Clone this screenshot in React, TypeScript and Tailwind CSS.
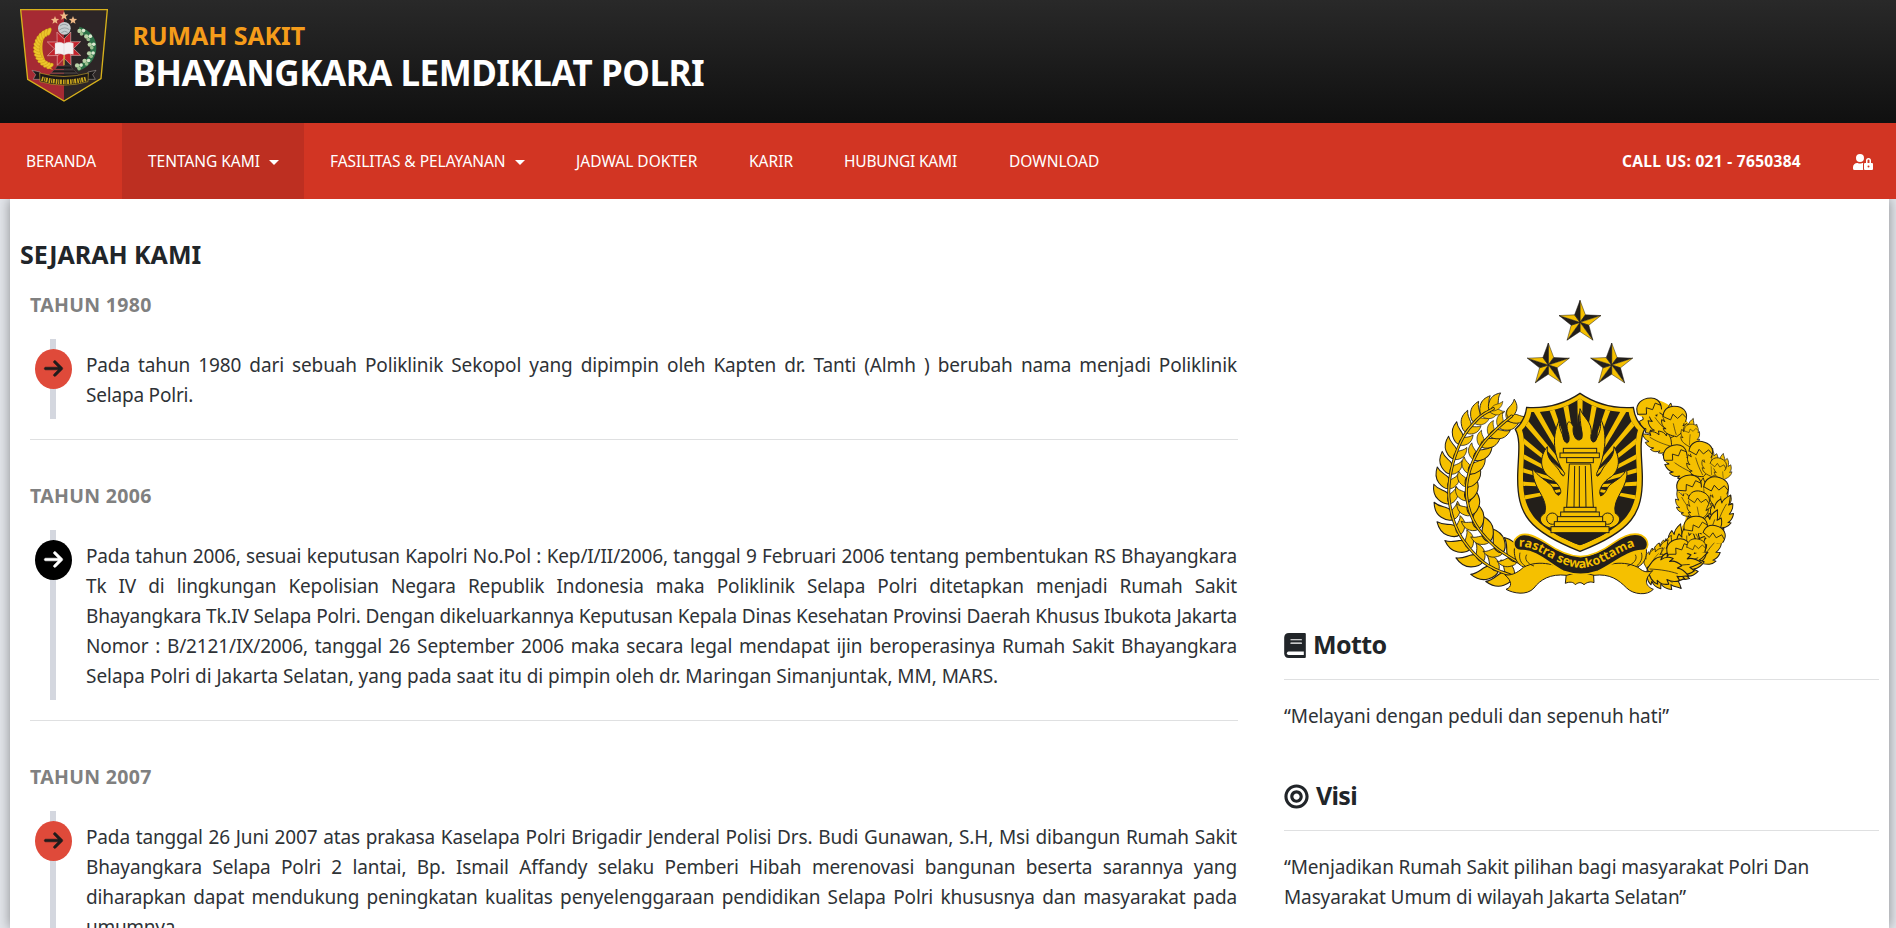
import React from "react";
import { FaBullseye, FaUserLock } from "react-icons/fa";
import { FaArrowRight } from "react-icons/fa6";

const GOLD = "#f5c000";
const INK = "#231f1a";

type Pt = [number, number];

/* ---------- drawing helpers ---------- */

function starFacets(cx: number, cy: number, r: number) {
  const facets: { d: string; dark: boolean }[] = [];
  const at = (i: number): Pt => {
    const a = (-90 + i * 36) * (Math.PI / 180);
    const rad = i % 2 === 0 ? r : r * 0.42;
    return [cx + Math.cos(a) * rad, cy + Math.sin(a) * rad];
  };
  for (let i = 0; i < 10; i++) {
    const p = at(i);
    const q = at(i + 1);
    facets.push({
      d: `M${cx} ${cy}L${p[0].toFixed(1)} ${p[1].toFixed(1)}L${q[0].toFixed(1)} ${q[1].toFixed(1)}Z`,
      dark: i % 2 === 1,
    });
  }
  return facets;
}

function Star({ cx, cy, r }: { cx: number; cy: number; r: number }) {
  return (
    <g stroke={INK} strokeWidth="1.5" strokeLinejoin="round">
      {starFacets(cx, cy, r).map((f) => (
        <path key={f.d} d={f.d} fill={f.dark ? INK : GOLD} />
      ))}
    </g>
  );
}

/* Catmull-Rom interpolation through a stem's control points. */
function along(points: Pt[], t: number): { x: number; y: number; angle: number } {
  const n = points.length - 1;
  const s = Math.min(t * n, n - 0.0001);
  const i = Math.floor(s);
  const u = s - i;
  const p0 = points[Math.max(i - 1, 0)];
  const p1 = points[i];
  const p2 = points[i + 1];
  const p3 = points[Math.min(i + 2, n)];
  const f = (k: 0 | 1) =>
    0.5 *
    (2 * p1[k] +
      (p2[k] - p0[k]) * u +
      (2 * p0[k] - 5 * p1[k] + 4 * p2[k] - p3[k]) * u * u +
      (3 * p1[k] - p0[k] - 3 * p2[k] + p3[k]) * u * u * u);
  const g = (k: 0 | 1) =>
    0.5 *
    (p2[k] -
      p0[k] +
      2 * (2 * p0[k] - 5 * p1[k] + 4 * p2[k] - p3[k]) * u +
      3 * (3 * p1[k] - p0[k] - 3 * p2[k] + p3[k]) * u * u);
  return { x: f(0), y: f(1), angle: (Math.atan2(g(1), g(0)) * 180) / Math.PI };
}

const outerStem: Pt[] = [[320, 892], [225, 850], [150, 765], [118, 665], [124, 570], [156, 478], [205, 415], [250, 386]];
const innerStem: Pt[] = [[330, 850], [255, 800], [195, 730], [170, 650], [178, 575], [212, 500], [262, 445], [305, 408]];

const LEAF = "M0 0C2 -14 16 -23 34 -18C48 -14 56 -9 72 -12C62 3 50 13 32 13C16 13 5 8 0 0Z";

function Grain({ stem, side, count, size }: { stem: Pt[]; side: 1 | -1; count: number; size: number }) {
  return (
    <>
      {Array.from({ length: count }, (_, i) => {
        const t = (i + 0.3) / count;
        const p = along(stem, t);
        const s = size * (1.05 - 0.3 * t);
        return (
          <path
            key={i}
            d={LEAF}
            transform={`translate(${p.x.toFixed(1)} ${p.y.toFixed(1)}) rotate(${(p.angle + side * 40).toFixed(1)}) scale(${s.toFixed(2)} ${(s * side).toFixed(2)})`}
          />
        );
      })}
    </>
  );
}

function stemPath(stem: Pt[]) {
  return Array.from({ length: 41 }, (_, i) => {
    const p = along(stem, i / 40);
    return `${i ? "L" : "M"}${p.x.toFixed(1)} ${p.y.toFixed(1)}`;
  }).join("");
}

const OAK =
  "M0 0C-18 -8 -36 -16 -38 -36L-29 -33C-40 -44 -41 -54 -37 -66L-28 -57C-34 -72 -27 -84 -21 -92L-13 -81C-14 -96 -4 -106 4 -114C4 -104 11 -94 9 -83L20 -92C26 -80 27 -70 22 -57L34 -64C37 -50 37 -42 28 -31L38 -34C34 -14 16 -8 0 0Z";

const oakLeaves: [number, number, number, number][] = [
  [790, 470, -45, 0.95], [785, 500, -68, 0.85], [800, 470, -12, 0.9], [838, 500, 6, 0.75],
  [850, 580, -60, 0.95], [880, 590, -22, 0.85], [905, 590, 0, 0.75], [940, 600, -2, 0.7],
  [855, 705, -38, 0.8], [890, 690, -8, 0.85], [935, 700, -2, 0.85], [870, 720, -10, 0.8],
  [918, 745, 22, 0.95], [880, 800, -28, 0.9], [895, 800, 12, 1.0], [800, 845, 4, 1.0], [840, 850, -8, 1.0],
  [870, 850, 34, 0.95], [765, 855, 10, 0.8], [830, 860, 30, 0.95], [735, 868, 22, 0.85], [785, 880, 58, 1.1],
  [712, 868, 34, 0.7], [740, 872, 78, 1.2], [712, 862, 120, 1.05], [712, 866, 98, 1.1],
];

const acorns: [number, number, number, number][] = [
  [718, 385, -15, 1.05], [796, 408, 10, 1], [796, 524, -15, 1], [874, 514, 15, 1], [926, 555, 25, 0.7], [845, 450, 5, 0.6],
  [838, 616, -10, 1.05], [920, 622, 15, 1.05], [868, 660, 20, 0.9], [858, 738, -5, 1], [914, 765, 25, 0.95], [806, 806, -15, 1], [860, 800, 10, 0.8],
];

const SHIELD =
  "M510 340C460 374 408 386 350 382C346 412 334 432 316 448C334 480 324 530 323 590C322 700 352 752 510 814C668 752 698 700 697 590C696 530 686 480 704 448C686 432 674 412 670 382C612 386 560 374 510 340Z";
const FIELD =
  "M510 356C462 386 415 397 364 396C360 420 350 436 336 450C348 488 340 532 339 590C338 690 368 740 510 796C652 740 682 690 681 590C680 532 672 488 684 450C670 436 660 420 656 396C605 397 558 386 510 356Z";
const FLAMES =
  "M425 745C395 740 378 715 404 700C418 655 366 625 368 566C384 588 400 596 414 608C434 620 430 640 446 646C464 634 440 606 420 592C388 570 388 530 412 500C408 540 432 548 448 572C456 590 462 592 464 580C436 540 420 480 448 420C446 450 458 458 462 478C470 500 484 486 474 456C466 430 476 412 490 440C486 460 496 482 508 480C524 474 506 420 510 386C520 414 546 424 544 460C538 480 550 496 558 478C572 452 574 440 570 414C592 450 590 520 560 580C558 594 566 590 574 574C588 544 612 540 612 500C634 540 626 572 604 590C580 604 562 630 572 648C592 640 588 620 606 610C622 598 640 590 650 566C660 620 604 655 616 700C642 715 625 740 595 745Z";

function PoliceEmblem() {
  return (
    <svg viewBox="0 0 1020 990" className="h-[330px] w-[340px]" aria-hidden="true">
      <Star cx={510} cy={127} r={66} />
      <Star cx={415} cy={255} r={66} />
      <Star cx={605} cy={255} r={66} />

      <g fill={GOLD} stroke={INK} strokeWidth="3" strokeLinejoin="round">
        <Grain stem={outerStem} side={-1} count={15} size={1.12} />
        <Grain stem={outerStem} side={1} count={15} size={0.82} />
        <Grain stem={innerStem} side={-1} count={13} size={0.8} />
        <Grain stem={innerStem} side={1} count={13} size={1.08} />
        <path d={LEAF} transform="translate(245 392) rotate(-32) scale(.6 .5)" />
        <path d={LEAF} transform="translate(298 414) rotate(-66) scale(.8)" />
      </g>
      <g fill="none" strokeLinecap="round">
        <path d={stemPath(outerStem)} stroke={INK} strokeWidth="9" />
        <path d={stemPath(outerStem)} stroke={GOLD} strokeWidth="4" />
        <path d={stemPath(innerStem)} stroke={INK} strokeWidth="9" />
        <path d={stemPath(innerStem)} stroke={GOLD} strokeWidth="4" />
      </g>

      <path
        d="M690 368C730 350 760 362 790 384C840 430 860 450 850 490C900 510 935 550 930 600C950 680 935 760 900 820C870 860 820 880 730 890L700 850C740 810 800 800 815 740C850 700 800 650 815 600C850 570 790 560 770 520C750 480 700 440 690 368Z"
        fill={GOLD}
      />
      <g fill={GOLD} stroke={INK} strokeWidth="3" strokeLinejoin="round">
        <path d="M688 424L700 418L696 404C730 396 760 420 766 446L776 470L764 468L756 484L748 474L738 484L732 470L722 474L720 460L706 458L708 446L696 444Z" />
        {oakLeaves.map(([x, y, a, s], i) => (
          <g key={i} transform={`translate(${x} ${y}) rotate(${a}) scale(${s})`}>
            <path d={OAK} />
            <path d="M0 -6C-3 -40 -2 -60 2 -84" fill="none" strokeWidth="2" />
          </g>
        ))}
        {acorns.map(([x, y, a, s], i) => (
          <g key={i} transform={`translate(${x} ${y}) rotate(${a}) scale(${s})`}>
            <path d="M-36 10C-40 -18 -20 -30 2 -29C26 -28 38 -12 33 12C26 27 -24 27 -36 10Z" stroke="none" />
            <path d="M-36 10C-40 -18 -20 -30 2 -29C26 -28 38 -12 33 12" fill="none" />
            <path d="M-36 8L-12 14L-8 -4L8 6L20 -10L34 0" fill="none" strokeWidth="2.5" />
          </g>
        ))}
      </g>

      <path d={SHIELD} fill={GOLD} stroke={INK} strokeWidth="4" />
      <clipPath id="field">
        <path d={FIELD} />
      </clipPath>
      <path d={FIELD} fill={INK} />
      <g clipPath="url(#field)" fill={GOLD}>
        {[-101, -87, -74, -62, -51, -40, -30, -20, -10, 0, 10, 20, 30, 40, 51, 62, 74, 87, 101].map((a) => (
          <path key={a} d="M507 620L500 250L520 250L513 620Z" transform={`rotate(${a} 510 620)`} />
        ))}
        <rect x="320" y="760" width="380" height="60" fill={INK} />
      </g>
      <path d={FLAMES} fill={GOLD} stroke={INK} strokeWidth="3" />
      <g fill={INK}>
        <path d="M500 440C496 460 498 480 509 480C522 480 520 458 512 436C508 420 508 408 510 392C500 410 504 424 500 440Z" />
        <path d="M462 436C452 458 458 486 468 487C484 480 474 460 466 446Z" />
        <path d="M558 436C568 458 562 486 552 487C536 480 546 460 554 446Z" />
      </g>
      <g fill={GOLD} stroke={INK} strokeWidth="3">
        <circle cx="427" cy="716" r="17" />
        <circle cx="593" cy="716" r="17" />
        <path d="M478 552H542L550 682H470Z" />
        <path d="M494 558L492 682M508 558V682M526 558L528 682" fill="none" />
        <rect x="460" y="505" width="100" height="14" />
        <rect x="450" y="519" width="118" height="14" />
        <rect x="470" y="533" width="80" height="15" />
        <rect x="462" y="682" width="96" height="14" />
        <rect x="452" y="696" width="116" height="14" />
        <rect x="442" y="710" width="136" height="15" />
        <rect x="433" y="725" width="154" height="15" />
        <rect x="423" y="740" width="174" height="18" />
      </g>

      <g fill={GOLD} stroke={INK} strokeWidth="3" strokeLinejoin="round">
        <path d="M470 872L466 910C480 904 490 906 496 914C506 906 514 906 522 914C532 906 542 904 552 908L550 872Z" />
        <path d="M318 784C304 826 320 858 350 864L450 866L400 806Z" />
        <path d="M704 784C718 826 704 858 672 864L572 866L624 806Z" />
        <path d="M340 862C390 836 440 856 500 878L470 886C420 880 390 900 372 924C350 948 310 940 288 928C306 922 308 904 284 884C300 888 322 880 340 862Z" />
        <path d="M684 862C630 836 580 856 520 878L552 886C600 880 626 900 650 924C670 944 712 948 730 928C706 918 700 900 728 872C706 880 696 872 684 862Z" />
      </g>
      <path
        d="M330 766C350 756 378 770 410 790C450 818 480 828 512 830C546 828 574 816 612 788C640 768 670 756 694 766C722 782 716 812 694 812C654 812 604 856 564 874C530 886 494 886 460 874C416 850 376 808 332 812C306 808 304 780 330 766Z"
        fill={INK}
        stroke={GOLD}
        strokeWidth="5"
      />
      <path d="M330 818C326 836 332 850 346 858M350 824C342 836 352 852 372 858M676 824C684 838 670 852 652 858M694 818C700 836 690 850 680 858" fill="none" stroke={INK} strokeWidth="2.5" />
      <path id="mottoLine" d="M326 800C390 798 430 858 512 864C590 860 630 800 700 796" fill="none" />
      <text fill={GOLD} className="font-['Noto_Sans',sans-serif] text-[37px] font-bold">
        <textPath href="#mottoLine" textLength="376" lengthAdjust="spacingAndGlyphs">
          rastra sewakottama
        </textPath>
      </text>
    </svg>
  );
}

/* ---------- header crest ---------- */

function arc(cx: number, cy: number, r: number, from: number, to: number, n: number) {
  return Array.from({ length: n }, (_, i) => {
    const deg = from + ((to - from) * i) / (n - 1);
    const a = (deg * Math.PI) / 180;
    return { x: cx + Math.cos(a) * r, y: cy + Math.sin(a) * r, deg };
  });
}

function plainStar(cx: number, cy: number, r: number) {
  return Array.from({ length: 10 }, (_, i) => {
    const a = ((-90 + i * 36) * Math.PI) / 180;
    const q = i % 2 ? r * 0.42 : r;
    return `${(cx + Math.cos(a) * q).toFixed(1)},${(cy + Math.sin(a) * q).toFixed(1)}`;
  }).join(" ");
}

function Crest() {
  return (
    <svg viewBox="57 24 270 285" className="h-[95px] w-[90px]" aria-hidden="true">
      <path d="M62 29H192V303L83 238Z" fill="#a62a33" />
      <path d="M192 29H322L303 236L192 303Z" fill="#2c2526" />
      <path d="M62 29H322L303 236L192 303L83 238Z" fill="none" stroke="#d8b21c" strokeWidth="4" />
      <g fill="#f0b986">
        <polygon points={plainStar(192, 48, 14)} />
        <polygon points={plainStar(165, 61, 13)} />
        <polygon points={plainStar(219, 61, 13)} />
      </g>
      <path d="M152 84C88 96 84 190 160 210C120 180 116 116 152 84Z" fill="#e3b81f" />
      <g fill="#edc62a" stroke="#b8860e" strokeWidth="1">
        {arc(164, 146, 54, 105, 252, 15).map((p) => (
          <ellipse key={p.deg} cx={p.x} cy={p.y} rx="12" ry="5.5" transform={`rotate(${p.deg + 38} ${p.x} ${p.y})`} />
        ))}
      </g>
      <path d="M236 88C298 108 294 182 232 206" fill="none" stroke="#2e7148" strokeWidth="17" />
      {arc(220, 146, 56, -64, 72, 6).map((p) => (
        <g key={p.deg}>
          <circle cx={p.x - 6} cy={p.y - 3} r="6.5" fill="#b9d3a8" />
          <circle cx={p.x + 6} cy={p.y - 4} r="5.5" fill="#dce8cf" />
          <circle cx={p.x} cy={p.y + 6} r="5.5" fill="#9dc08f" />
        </g>
      ))}
      <g fill="#c3232c" stroke="#e9c9c3" strokeWidth="1.5">
        {[0, 45, 90, 135, 180, 225, 270, 315].map((a) => (
          <path key={a} d="M192 146L180 122L192 92L204 122Z" transform={`rotate(${a + 22} 192 146)`} />
        ))}
      </g>
      <path d="M192 166V196" stroke="#d7b03a" strokeWidth="4" />
      <path d="M165 130Q180 123 192 131Q205 123 220 130V163Q205 158 192 165Q180 158 165 163Z" fill="#f6f1f2" stroke="#cfc4c8" strokeWidth="1" />
      <path d="M192 131V165" stroke="#d9cfd2" strokeWidth="1.5" />
      <circle cx="193" cy="85" r="19" fill="#c7cdd0" />
      <path d="M180 78Q192 68 204 77M178 90Q194 78 208 89M184 98Q194 90 203 97" fill="none" stroke="#8d979c" strokeWidth="2.5" />
      <path d="M172 198H212L218 207H166ZM162 210H222L230 218H154ZM150 221H234L240 229H144Z" fill="#1f1b1d" stroke="#77706c" strokeWidth="1" />
      <path d="M120 216L96 211L107 224L100 238L122 238ZM264 216L288 211L278 224L286 238L262 238Z" fill="#1b1718" stroke="#b9b1ac" strokeWidth="1.5" />
      <path d="M119 219Q192 240 265 219L264 245Q192 266 120 245Z" fill="#1b1718" stroke="#b99a24" strokeWidth="2" />
      <path d="M125 236Q192 255 260 236" fill="none" stroke="#c9a51c" strokeWidth="14" strokeDasharray="5 2.5 3 2 6 3" />
    </svg>
  );
}

function BookIcon() {
  return (
    <svg viewBox="0 0 64 74" className="h-[25px] w-[22px]" aria-hidden="true">
      <path d="M14 0H61Q64 0 64 3V71Q64 74 61 74H14Q0 74 0 60V14Q0 0 14 0Z" fill="#212529" />
      <path d="M20 20H51M20 30H51" stroke="#fff" strokeWidth="3.5" strokeLinecap="round" />
      <path d="M13 55H58V65H13Q8 65 8 60Q8 55 13 55Z" fill="#fff" />
    </svg>
  );
}

/* ---------- page content ---------- */

const navItems = [
  { label: "BERANDA", cls: "w-[122px]", text: "tracking-[-0.13px]" },
  { label: "TENTANG KAMI", cls: "w-[182px] bg-[#bd2f21]", text: "tracking-[-0.03px]", caret: true },
  { label: "FASILITAS & PELAYANAN", cls: "w-[246px]", text: "tracking-[-0.04px]", caret: true },
  { label: "JADWAL DOKTER", cls: "w-[173px]", text: "tracking-[0.03px]" },
  { label: "KARIR", cls: "w-[95px]", text: "" },
  { label: "HUBUNGI KAMI", cls: "w-[165px]", text: "tracking-[-0.2px]" },
  { label: "DOWNLOAD", cls: "w-[142px]", text: "" },
];

type Line = { t: string; cls: string };
const J = "[text-align-last:justify] tracking-[-0.14px]";

const history: { year: string; dark: boolean; lines: Line[] }[] = [
  {
    year: "TAHUN 1980",
    dark: false,
    lines: [
      { t: "Pada tahun 1980 dari sebuah Poliklinik Sekopol yang dipimpin oleh Kapten dr. Tanti (Almh ) berubah nama menjadi Poliklinik", cls: J },
      { t: "Selapa Polri.", cls: "tracking-[-0.2px]" },
    ],
  },
  {
    year: "TAHUN 2006",
    dark: true,
    lines: [
      { t: "Pada tahun 2006, sesuai keputusan Kapolri No.Pol : Kep/I/II/2006, tanggal 9 Februari 2006 tentang pembentukan RS Bhayangkara", cls: J },
      { t: "Tk IV di lingkungan Kepolisian Negara Republik Indonesia maka Poliklinik Selapa Polri ditetapkan menjadi Rumah Sakit", cls: J },
      { t: "Bhayangkara Tk.IV Selapa Polri. Dengan dikeluarkannya Keputusan Kepala Dinas Kesehatan Provinsi Daerah Khusus Ibukota Jakarta", cls: "[text-align-last:justify] tracking-[-0.21px]" },
      { t: "Nomor : B/2121/IX/2006, tanggal 26 September 2006 maka secara legal mendapat ijin beroperasinya Rumah Sakit Bhayangkara", cls: J },
      { t: "Selapa Polri di Jakarta Selatan, yang pada saat itu di pimpin oleh dr. Maringan Simanjuntak, MM, MARS.", cls: "tracking-[-0.045px]" },
    ],
  },
  {
    year: "TAHUN 2007",
    dark: false,
    lines: [
      { t: "Pada tanggal 26 Juni 2007 atas prakasa Kaselapa Polri Brigadir Jenderal Polisi Drs. Budi Gunawan, S.H, Msi dibangun Rumah Sakit", cls: J },
      { t: "Bhayangkara Selapa Polri 2 lantai, Bp. Ismail Affandy selaku Pemberi Hibah merenovasi bangunan beserta sarannya yang", cls: J },
      { t: "diharapkan dapat mendukung peningkatan kualitas penyelenggaraan pendidikan Selapa Polri khususnya dan masyarakat pada", cls: J },
      { t: "umumnya.", cls: "tracking-[-0.3px]" },
    ],
  },
];

function Caret() {
  return <span className="ml-[9px] h-0 w-0 border-x-[5px] border-t-[5px] border-x-transparent border-t-white" />;
}

function TimelineEntry({ year, dark, lines }: (typeof history)[number]) {
  return (
    <section className="mb-[41px]">
      <h2 className="mb-[19px] h-[30px] text-[19.5px] leading-[30px] font-bold tracking-[0.3px] text-[#808080]">{year}</h2>
      <div className="flex">
        <div className="flex w-14 shrink-0">
          <div className="ml-5 flex w-1.5 justify-center bg-[#d4d7df] pt-2.5">
            <span
              className={`flex h-10 w-[37px] shrink-0 items-center justify-center rounded-[50%] text-[21px] ${dark ? "bg-black text-white" : "bg-[#df4a3a] text-[#1f1c1c]"}`}
            >
              <FaArrowRight stroke="currentColor" strokeWidth={14} className="-mt-px" />
            </span>
          </div>
        </div>
        <div className="w-[1151px] shrink-0 pt-[11px] pb-[9px]">
          {lines.map((l) => (
            <p key={l.t} className={`h-[30px] text-[19px] leading-[30px] whitespace-nowrap ${l.cls}`}>{l.t}</p>
          ))}
        </div>
      </div>
      <hr className="mt-5 border-[#dfe0e1]" />
    </section>
  );
}

export default function App() {
  return (
    <div className="flex h-[928px] w-full flex-col overflow-hidden bg-[#e3e6eb] font-['Noto_Sans',sans-serif] text-[#2e3236]">
      <header className="flex h-[123px] shrink-0 bg-linear-to-b from-[#292929] to-[#101010] pt-2 pl-[19px]">
        <Crest />
        <div className="ml-[23.5px] pt-[9px] font-bold whitespace-nowrap">
          <div className="h-[37px] text-[25px] leading-[37px] tracking-[-0.1px] text-[#f59c1a]">RUMAH SAKIT</div>
          <div className="h-[37px] text-[35px] leading-[37px] tracking-[-0.48px] text-white">BHAYANGKARA LEMDIKLAT POLRI</div>
        </div>
      </header>

      <nav className="z-10 flex h-[76px] shrink-0 justify-between bg-[#d23523] text-[15.5px] text-white">
        <div className="flex">
          {navItems.map((n) => (
            <a key={n.label} className={`flex shrink-0 items-center pt-0.5 pl-[26px] whitespace-nowrap ${n.cls}`}>
              <span className={n.text}>{n.label}</span>
              {n.caret && <Caret />}
            </a>
          ))}
        </div>
        <div className="flex items-center pt-0.5 pr-[23px]">
          <span className="font-bold tracking-[0.3px] whitespace-nowrap">CALL US: 021 - 7650384</span>
          <FaUserLock className="ml-[52px] h-4 w-5" />
        </div>
      </nav>

      <main className="mr-[7px] ml-2.5 flex min-h-0 flex-1 bg-white shadow-[0_0_12px_rgba(0,0,0,0.4)]">
        <div className="w-[1228px] shrink-0 pt-[37px]">
          <h1 className="ml-2.5 h-[37px] text-[25px] leading-[37px] font-bold tracking-[-0.02px] text-[#212529]">SEJARAH KAMI</h1>
          <div className="ml-5 pt-[17px]">
            {history.map((h) => (
              <TimelineEntry key={h.year} {...h} />
            ))}
          </div>
        </div>

        <aside className="ml-[46px] w-[595px] shrink-0 pt-[81px]">
          <div className="pl-[126px]">
            <PoliceEmblem />
          </div>
          <h3 className="mt-4 flex h-[38px] items-center text-[25px] font-bold tracking-[-0.6px] text-[#212529]">
            <BookIcon />
            <span className="ml-[7px]">Motto</span>
          </h3>
          <hr className="mt-[15px] border-[#dfe0e1]" />
          <p className="mt-[21px] text-[19px] leading-[30px] tracking-[-0.083px]">“Melayani dengan peduli dan sepenuh hati”</p>
          <h3 className="mt-[46px] flex h-[38px] items-center text-[25px] font-bold tracking-[-0.7px] text-[#212529]">
            <FaBullseye className="h-[25px] w-[25px]" />
            <span className="ml-[7px]">Visi</span>
          </h3>
          <hr className="mt-[15px] border-[#dfe0e1]" />
          <p className="mt-[21px] text-[19px] leading-[30px] tracking-[-0.132px]">
            “Menjadikan Rumah Sakit pilihan bagi masyarakat Polri Dan
            <br />
            Masyarakat Umum di wilayah Jakarta Selatan”
          </p>
        </aside>
      </main>
    </div>
  );
}
